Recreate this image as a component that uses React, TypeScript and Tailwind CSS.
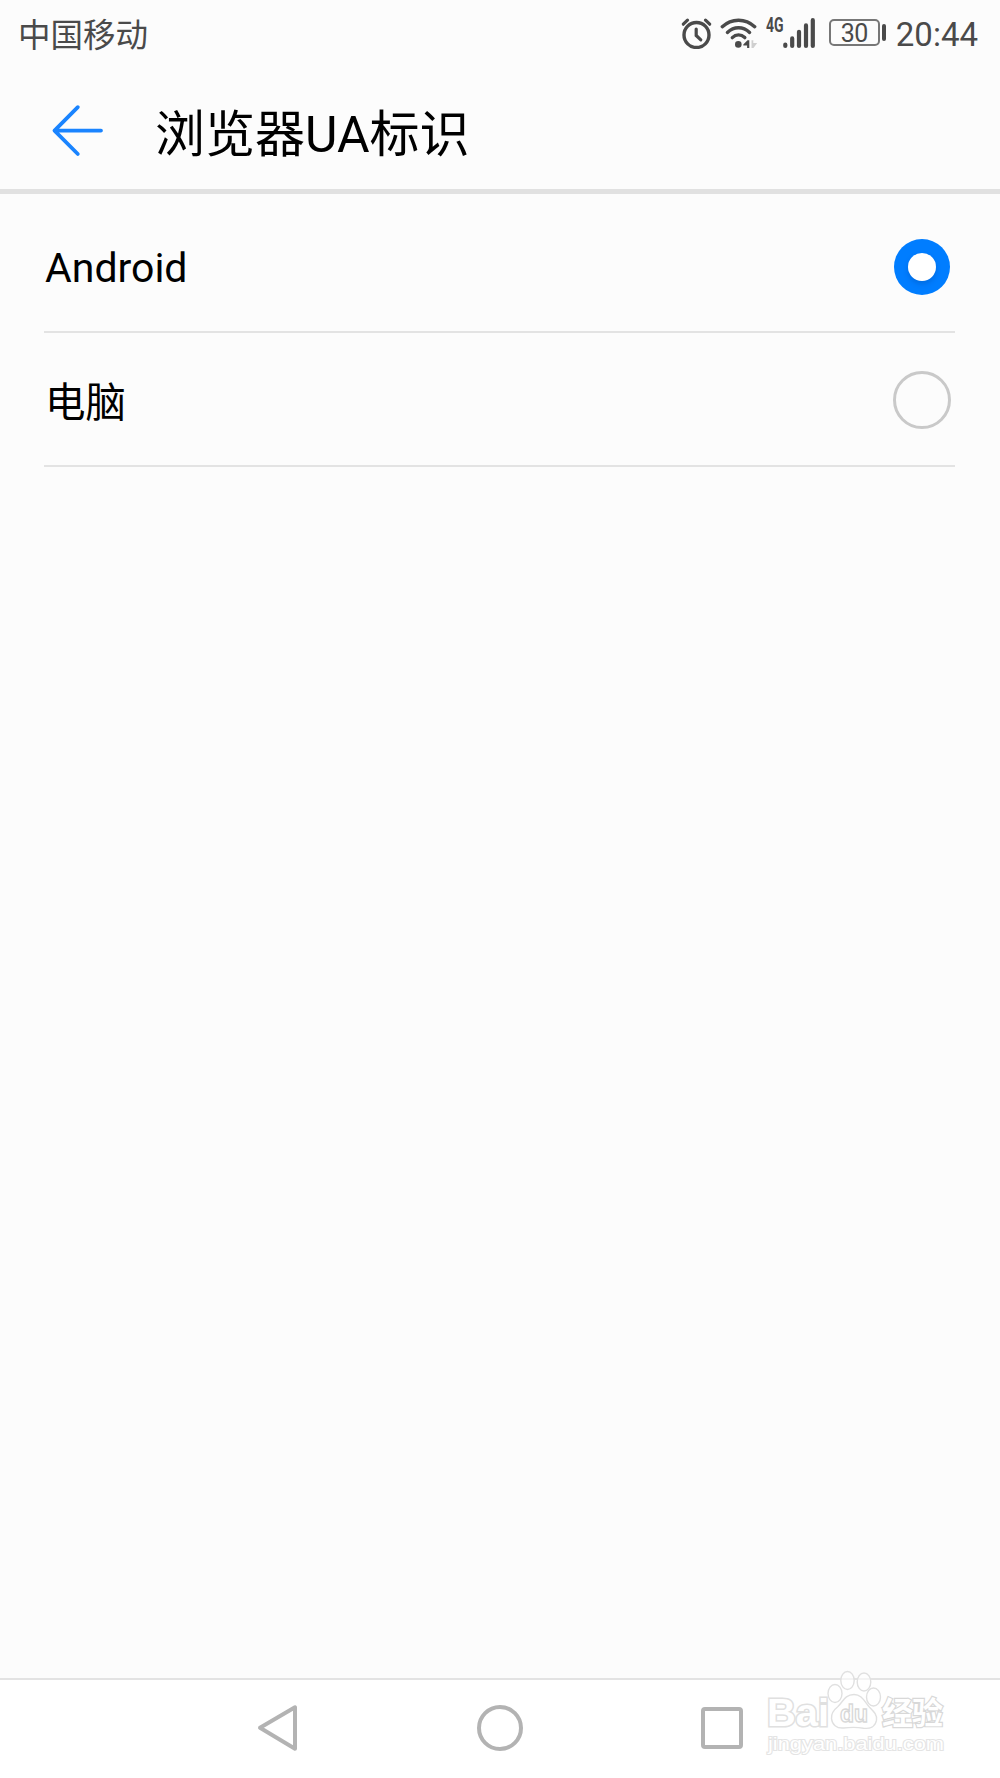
import React, { useState } from 'react';

interface OptionRowProps {
  label: string;
  selected: boolean;
  className: string;
  labelClassName: string;
  onSelect: () => void;
}

function AlarmIcon() {
  return (
    <svg width="32" height="32" viewBox="0 0 32 32" fill="none" stroke="#4a4a4a" strokeLinecap="round">
      <circle cx="15.5" cy="18" r="12.5" strokeWidth="3.4" />
      <path d="M15.2 12v6.5l4.6 4.4" strokeWidth="3.2" />
      <path d="M2.3 7.2 6.5 3.2M28.7 7.2 24.5 3.2" strokeWidth="3.2" />
    </svg>
  );
}

function WifiIcon() {
  return (
    <svg width="38" height="32" viewBox="0 0 38 32" fill="none" stroke="#4a4a4a" strokeLinecap="round">
      <path d="M2.3 9.7C11.5 1 25.5 1 34.7 9.7" strokeWidth="3.4" />
      <path d="M7.4 15.4C14 9.2 23 9.2 29.6 15.4" strokeWidth="3.4" />
      <path d="M12.3 20.6C16 17 21 17 24.8 20.6" strokeWidth="3.4" />
      <circle cx="18.3" cy="27.4" r="3.3" fill="#4a4a4a" stroke="none" />
      <path d="M29.3 23.3v7.8h-2.2v-2.6h-3.8v-1.1l4.2-4.1Z" fill="#4a4a4a" stroke="none" />
      <path d="M31.5 23.3v7.8h2l3.7-5.2h-3.9v-2.6Z" fill="#cfcfcf" stroke="none" />
    </svg>
  );
}

function SignalIcon() {
  return (
    <svg width="34" height="32" viewBox="0 0 34 32" stroke="#4a4a4a" strokeWidth="4.2" strokeLinecap="round">
      <path d="M2.3 27.6v1.4M9.2 21.4v7.6M16 14.8v14.2M23 8.4v20.6M29.8 3.2v25.8" />
    </svg>
  );
}

function StatusBar() {
  return (
    <div className="flex h-[70px] items-start justify-between pl-[18px] pr-[22px] text-[#4a4a4a]">
      <span className="mt-[12px] text-[32.5px] leading-[48px]">中国移动</span>
      <div className="flex items-start">
        <div className="mt-[17px] flex">
          <AlarmIcon />
          <div className="ml-[7px]">
            <WifiIcon />
          </div>
          <span className="ml-[8px] w-[17px] text-[20px] leading-[17px] font-bold">
            <span className="inline-block origin-left scale-x-[0.7]">4G</span>
          </span>
          <SignalIcon />
        </div>
        <div className="mt-[19px] ml-[12px] flex items-center">
          <div className="flex h-[27px] w-[51px] items-center justify-center rounded-[5px] border-2 border-[#777]">
            <span className="mt-px text-[25px] leading-[27px] tracking-[-0.5px]">30</span>
          </div>
          <div className="ml-[2px] h-[17px] w-[4px] rounded-full bg-[#4a4a4a]"></div>
        </div>
        <span className="mt-[11px] ml-[10px] text-[33px] leading-[48px]">20:44</span>
      </div>
    </div>
  );
}

function OptionRow({ label, selected, className, labelClassName, onSelect }: OptionRowProps) {
  return (
    <div
      onClick={onSelect}
      className={`flex items-center justify-between border-b-2 border-[#e3e3e3] pr-[4px] ${className}`}
    >
      <span className={labelClassName}>{label}</span>
      {selected ? (
        <div className="mt-[8px] mr-px flex h-14 w-14 items-center justify-center rounded-full bg-[#007dff]">
          <div className="h-7 w-7 rounded-full bg-white shadow-[0_3px_5px_rgba(0,60,140,0.25)]"></div>
        </div>
      ) : (
        <svg className="mt-[2px]" width="58" height="58" viewBox="0 0 58 58" fill="none">
          <circle cx="29" cy="29" r="27.5" stroke="#c9c9c9" strokeWidth="3" />
        </svg>
      )}
    </div>
  );
}

function Watermark() {
  return (
    <svg
      className="absolute top-[1668px] left-[760px]"
      width="200"
      height="92"
      viewBox="0 0 200 92"
      fill="#fff"
      stroke="#e0e0e0"
      strokeWidth="1.4"
    >
      <text
        x="7"
        y="58"
        fontSize="39"
        fontFamily="Liberation Sans, sans-serif"
        fontWeight="bold"
        paintOrder="stroke"
        strokeWidth="3"
        textLength="62"
        lengthAdjust="spacingAndGlyphs"
      >
        Bai
      </text>
      <ellipse cx="75" cy="25.5" rx="7" ry="9" fillOpacity="0.6" />
      <ellipse cx="87.5" cy="12.5" rx="6.7" ry="9" fillOpacity="0.6" />
      <ellipse cx="104" cy="14" rx="6.8" ry="9" fillOpacity="0.6" />
      <ellipse cx="113.5" cy="29" rx="7" ry="9" fillOpacity="0.6" />
      <path d="M94 26.5c-9 0-11 7-16 12-5 4-7 7-6.5 12 .5 6 5 10 12 9.5 7-.8 14-.8 20 .2 7 1 12-2 13-8 .7-5-2-8-7-13-5-5-7-12.7-15.5-12.7Z" />
      <text
        x="80"
        y="54"
        fontSize="24"
        fontFamily="Liberation Sans, sans-serif"
        fontWeight="bold"
        stroke="#d8d8d8"
        textLength="28"
        lengthAdjust="spacingAndGlyphs"
      >
        du
      </text>
      <text
        x="122"
        y="56"
        fontSize="31"
        fontFamily="Noto Sans CJK SC, sans-serif"
        fontWeight="bold"
        paintOrder="stroke"
        stroke="#d8d8d8"
        strokeWidth="2.4"
        textLength="61"
      >
        经验
      </text>
      <text
        x="8"
        y="82"
        fontSize="19"
        fontFamily="Liberation Sans, sans-serif"
        paintOrder="stroke"
        stroke="#e4e4e4"
        strokeWidth="2"
        textLength="176"
        lengthAdjust="spacingAndGlyphs"
      >
        jingyan.baidu.com
      </text>
    </svg>
  );
}

export default function App() {
  const [agent, setAgent] = useState('android');

  return (
    <div className="relative flex h-[1778px] w-[1000px] flex-col overflow-hidden bg-[#fcfcfc] font-['Roboto','Noto_Sans_CJK_SC',sans-serif] text-black">
      <StatusBar />

      {/* Header */}
      <div className="flex h-[124px] items-start border-b-[5px] border-[#e1e1e1] pl-[50px]">
        <svg
          className="mt-[34px]"
          width="54"
          height="54"
          viewBox="0 0 54 54"
          fill="none"
          stroke="#1a84ff"
          strokeWidth="3.8"
          strokeLinecap="round"
          strokeLinejoin="round"
        >
          <path d="M27.8 3.2 4.5 26.6 27.8 50M4.5 26.6h46.5" />
        </svg>
        <h1 className="mt-[29px] ml-[51px] text-[50px] leading-[72px]">浏览器UA标识</h1>
      </div>

      {/* Options */}
      <div className="flex-1 pr-[45px] pl-[44px]">
        <OptionRow
          label="Android"
          selected={agent === 'android'}
          className="h-[139px]"
          labelClassName="mt-[10px] ml-px text-[41px] leading-[48px]"
          onSelect={() => setAgent('android')}
        />
        <OptionRow
          label="电脑"
          selected={agent === 'pc'}
          className="h-[134px]"
          labelClassName="mt-[8px] ml-px text-[40.5px] leading-[58px]"
          onSelect={() => setAgent('pc')}
        />
      </div>

      {/* Navigation bar */}
      <div className="flex h-[100px] items-center border-t-2 border-[#e3e3e3] bg-white pb-[2px] pl-[256px]">
        <svg width="44" height="50" viewBox="0 0 44 50" fill="none" stroke="#b3b3b3" strokeWidth="4" strokeLinejoin="round">
          <path d="M39 4.3v41.4L4 24.8Z" />
        </svg>
        <div className="ml-[177px] h-[46px] w-[46px] rounded-full border-4 border-[#b3b3b3]"></div>
        <div className="ml-[178px] h-[42px] w-[42px] rounded-[4px] border-4 border-[#b3b3b3]"></div>
      </div>

      <Watermark />
    </div>
  );
}
